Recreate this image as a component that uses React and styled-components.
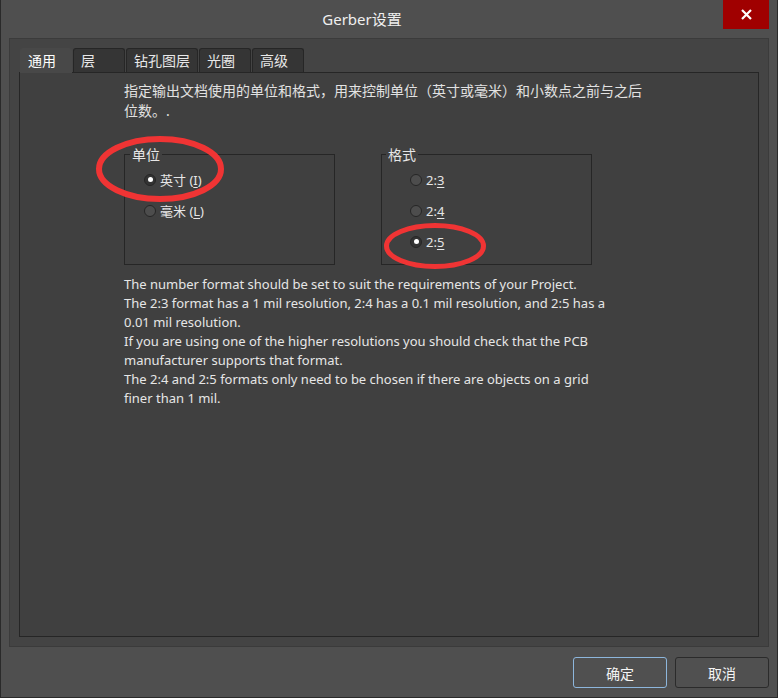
import React from 'react';
import styled, { createGlobalStyle } from 'styled-components';

const GlobalStyle = createGlobalStyle`
  html, body {
    margin: 0;
    padding: 0;
    background: #4f4f4f;
  }
  * {
    box-sizing: border-box;
  }
`;

const cjk = `"Noto Sans", "Noto Sans CJK SC", sans-serif`;

const Window = styled.div`
  position: relative;
  width: 778px;
  height: 698px;
  background: #4f4f4f;
  border: 1px solid #2a2a2a;
  border-top: none;
  display: flex;
  flex-direction: column;
  font-family: ${cjk};
  color: #e6e6e6;
`;

const TitleBar = styled.div`
  height: 38px;
  display: flex;
  align-items: flex-start;
  padding-right: 8px;
`;

const Title = styled.div`
  flex: 1;
  text-align: center;
  font-size: 15px;
  line-height: 38px;
  color: #f0f0f0;
`;

const CloseButton = styled.div`
  width: 46px;
  height: 29px;
  background: #a00000;
  display: flex;
  align-items: center;
  justify-content: center;
`;

const Body = styled.div`
  padding: 0 8px;
`;

const OuterPanel = styled.div`
  height: 609px;
  background: #444444;
  border: 1px solid #3b3b3b;
  padding: 9px;
  display: flex;
  flex-direction: column;
`;

const TabStrip = styled.div`
  display: flex;
  gap: 1px;
  height: 24px;
  position: relative;
  z-index: 1;
`;

const Tab = styled.div`
  min-width: 52px;
  height: ${p => (p.$active ? '25px' : '24px')};
  padding: 0 7px;
  font-size: 14px;
  line-height: 24px;
  border-radius: 3px 3px 0 0;
  color: ${p => (p.$active ? '#ffffff' : '#e8e8e8')};
  background: ${p => (p.$active ? '#484848' : '#353535')};
  border: 1px solid ${p => (p.$active ? '#484848' : '#262626')};
  border-bottom: none;
  margin-left: ${p => (p.$first ? '1px' : '0')};
`;

const TabPage = styled.div`
  flex: 1;
  background: #404040;
  border: 1px solid #262626;
  padding: 8px 0 0 104px;
`;

const Intro = styled.p`
  margin: 0;
  font-size: 14px;
  line-height: 20px;
  color: #e2e2e2;
`;

const GroupRow = styled.div`
  display: flex;
  gap: 46px;
  margin-top: 33px;
`;

const GroupBox = styled.div`
  width: 211px;
  height: 111px;
  border: 1px solid #262626;
  display: flex;
  flex-direction: column;
`;

const Legend = styled.div`
  align-self: flex-start;
  margin: -9px 0 0 ${p => p.$indent}px;
  padding: 0 2px;
  background: #404040;
  font-size: 14px;
  line-height: 18px;
  color: #e6e6e6;
`;

const Option = styled.label`
  height: 31px;
  display: flex;
  align-items: center;
  gap: 4px;
  padding-left: ${p => p.$indent}px;
  font-size: 13px;
  color: #e6e6e6;
`;

const RadioDot = styled.span`
  width: 12px;
  height: 12px;
  border-radius: 50%;
  border: 1px solid #262626;
  background: ${p => (p.$checked ? '#333333' : '#4d4d4d')};
  display: flex;
  align-items: center;
  justify-content: center;

  &::after {
    content: '';
    display: ${p => (p.$checked ? 'block' : 'none')};
    width: 5px;
    height: 5px;
    border-radius: 50%;
    background: #ffffff;
  }
`;

const Key = styled.span`
  text-decoration: underline;
  text-underline-offset: 2px;
`;

const Notes = styled.div`
  margin-top: 10px;
  font-family: "Noto Sans", sans-serif;
  font-size: 13px;
  line-height: 19px;
  color: #e6e6e6;
  white-space: nowrap;
`;

const Footer = styled.div`
  display: flex;
  justify-content: flex-end;
  gap: 8px;
  padding: 10px 8px 0 0;
`;

const Button = styled.button`
  width: 94px;
  height: 31px;
  border-radius: 3px;
  background: #505050;
  border: 1px solid ${p => (p.$focused ? '#8db6dc' : '#2b2b2b')};
  color: #f4f4f4;
  font-family: ${cjk};
  font-size: 14px;
  padding: 0;
`;

const Mark = styled.svg`
  position: absolute;
  left: ${p => p.$x}px;
  top: ${p => p.$y}px;
  pointer-events: none;
`;

const units = [
  { label: '英寸', key: 'I', checked: true },
  { label: '毫米', key: 'L', checked: false },
];

const formats = [
  { pre: '2:', key: '3', checked: false },
  { pre: '2:', key: '4', checked: false },
  { pre: '2:', key: '5', checked: true },
];

const notes = [
  'The number format should be set to suit the requirements of your Project.',
  'The 2:3 format has a 1 mil resolution, 2:4 has a 0.1 mil resolution, and 2:5 has a',
  '0.01 mil resolution.',
  'If you are using one of the higher resolutions you should check that the PCB',
  'manufacturer supports that format.',
  'The 2:4 and 2:5 formats only need to be chosen if there are objects on a grid',
  'finer than 1 mil.',
];

const tabs = ['通用', '层', '钻孔图层', '光圈', '高级'];

const Ring = ({ x, y, w, h, sw }) => (
  <Mark $x={x} $y={y} width={w} height={h}>
    <ellipse
      cx={w / 2}
      cy={h / 2}
      rx={w / 2 - sw / 2 - 1}
      ry={h / 2 - sw / 2 - 1}
      fill="none"
      stroke="#f03434"
      strokeWidth={sw}
    />
  </Mark>
);

export default function App() {
  return (
    <>
      <GlobalStyle />
      <Window>
        <TitleBar>
          <Title>Gerber设置</Title>
          <CloseButton>
            <svg width="11" height="11" viewBox="0 0 11 11">
              <path d="M1 1 L10 10 M10 1 L1 10" stroke="#fff" strokeWidth="2.2" />
            </svg>
          </CloseButton>
        </TitleBar>

        <Body>
          <OuterPanel>
            <TabStrip>
              {tabs.map((t, i) => (
                <Tab key={t} $active={i === 0} $first={i === 0}>{t}</Tab>
              ))}
            </TabStrip>
            <TabPage>
              <Intro>
                指定输出文档使用的单位和格式，用来控制单位（英寸或毫米）和小数点之前与之后
                <br />
                位数。.
              </Intro>

              <GroupRow>
                <GroupBox>
                  <Legend $indent={5}>单位</Legend>
                  {units.map(u => (
                    <Option key={u.key} $indent={19}>
                      <RadioDot $checked={u.checked} />
                      <span>{u.label} (<Key>{u.key}</Key>)</span>
                    </Option>
                  ))}
                </GroupBox>
                <GroupBox>
                  <Legend $indent={4}>格式</Legend>
                  {formats.map(f => (
                    <Option key={f.key} $indent={28}>
                      <RadioDot $checked={f.checked} />
                      <span>{f.pre}<Key>{f.key}</Key></span>
                    </Option>
                  ))}
                </GroupBox>
              </GroupRow>

              <Notes>
                {notes.map(line => (
                  <div key={line}>{line}</div>
                ))}
              </Notes>
            </TabPage>
          </OuterPanel>
        </Body>

        <Footer>
          <Button $focused>确定</Button>
          <Button>取消</Button>
        </Footer>

        <Ring x={94} y={135} w={130} h={68} sw={6} />
        <Ring x={382} y={222} w={104} h={48} sw={5} />
      </Window>
    </>
  );
}
